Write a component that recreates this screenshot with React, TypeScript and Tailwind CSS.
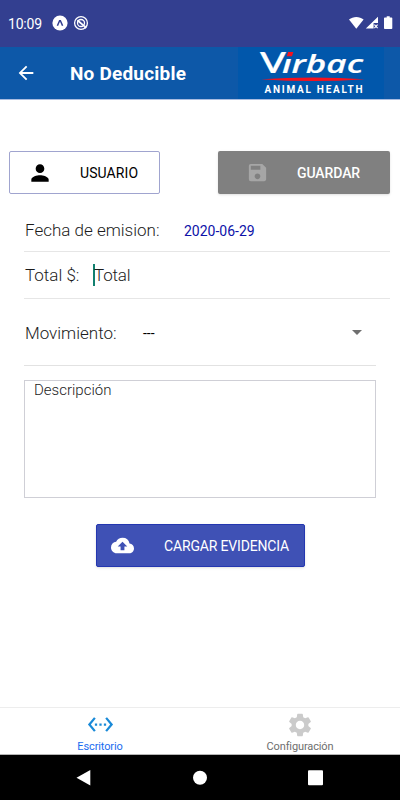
import { useState } from 'react';
import {
  MdArrowBack,
  MdArrowDropDown,
  MdCloudUpload,
  MdPerson,
  MdSave,
  MdSettings,
  MdSettingsEthernet,
} from 'react-icons/md';

function StatusBar() {
  return (
    <div className="h-[46px] shrink-0 bg-[#333f90] flex items-center pl-2 pr-[7px] text-white">
      <span className="w-[44px] mt-0.5 text-[14px] leading-4 tracking-[-0.2px]">10:09</span>
      <svg width="16" height="16" viewBox="0 0 16 16">
        <circle cx="8" cy="8" r="7.6" fill="#fff" />
        <path d="M5.4 10.8 7.6 5.8h.8l2.2 5" fill="none" stroke="#333f90" strokeWidth="1.5" />
      </svg>
      <svg width="16" height="16" viewBox="0 0 16 16" className="ml-[5px]" fill="none" stroke="#fff">
        <circle cx="8" cy="8" r="6.4" strokeWidth="1.3" />
        <circle cx="8" cy="8" r="3.5" strokeWidth="1.3" />
        <path d="m4.4 5.2 7.5 6.4" strokeWidth="1.8" />
        <path d="m11.5 11.5 1.6 1.6" strokeWidth="1.8" />
      </svg>
      <svg width="46" height="16" viewBox="0 0 46 16" className="ml-auto" fill="#fff">
        <path d="M2 4.6C6.2 1 12.4 1 16.6 4.6L9.3 13.7z" />
        <path d="M31 1.8v6.1h-4.4v5.6h-7.8z" />
        <path d="m27.4 9.6 3.2 3.6m0-3.6-3.2 3.6" stroke="#fff" strokeWidth="1.1" />
        <path d="M39.7 1.2h3v1.2h1.8c.5 0 .8.3.8.8v10c0 .5-.3.8-.8.8h-6.7c-.5 0-.8-.3-.8-.8v-10c0-.5.3-.8.8-.8h1.9z" />
      </svg>
    </div>
  );
}

function Logo() {
  return (
    <svg width="146" height="52" viewBox="0 0 146 52" className="bg-[#0157ab] overflow-visible">
      <g fill="#fff" stroke="#fff" strokeWidth="0.2" fontWeight="600">
        <text x="22" y="26.4" fontSize="29" fontFamily="Lato, sans-serif" textLength="26" lengthAdjust="spacingAndGlyphs">V</text>
        <text x="44" y="26.4" fontSize="25.5" fontFamily="'Open Sans', sans-serif" fontStyle="italic" textLength="81" lengthAdjust="spacingAndGlyphs">ırbac</text>
      </g>
      <path d="M50.2 5h5.2l-1.4 4.2h-5.2z" fill="#f5121d" />
      <path d="M23 32.2Q75 29 127 32.2Q75 36 23 32.2z" fill="#f5121d" />
      <text x="26.5" y="45.6" fill="#fff" fontFamily="Roboto, sans-serif" fontWeight="700" fontSize="10" textLength="98">
        ANIMAL HEALTH
      </text>
    </svg>
  );
}

function Header() {
  return (
    <header className="h-[54px] shrink-0 bg-[#0d58a8] border-t border-t-[#333f90] border-b border-b-[#a9bce0] flex items-center pl-[15px] pr-4">
      <MdArrowBack size={22} color="#fff" />
      <h1 className="ml-[33px] mt-0.5 text-[19px] tracking-[0.2px] font-bold text-white">No Deducible</h1>
      <div className="ml-auto">
        <Logo />
      </div>
    </header>
  );
}

export default function App() {
  const [descripcion, setDescripcion] = useState('');

  return (
    <div className="w-[400px] h-[800px] flex flex-col bg-white font-[Roboto,'Noto_Sans',sans-serif] text-[#1c1c1c] overflow-hidden">
      <StatusBar />
      <Header />

      <main className="flex-1 pt-[51px]">
        <div className="flex justify-between pl-[9px] pr-[10px]">
          <button className="w-[151px] h-[43px] border border-[#a0a4cf] rounded-xs flex items-center pl-[17px] text-black">
            <MdPerson size={26} />
            <span className="ml-[27px] mt-0.5 text-[14px] tracking-[0.1px]">USUARIO</span>
          </button>
          <button className="w-[172px] h-[43px] bg-[#808080] rounded-xs shadow-sm flex items-center pl-[28px] text-white">
            <MdSave size={23} color="#a6a6a6" />
            <span className="ml-[28px] mt-0.5 text-[14px] tracking-[-0.1px] font-medium">GUARDAR</span>
          </button>
        </div>

        <div className="ml-6 mr-[10px] h-[58px] pt-[17px] pl-px flex items-center border-b border-[#e6e6e6]">
          <span className="w-[159px] text-[17px] font-light">Fecha de emision:</span>
          <span className="text-[14px] text-[#0d12a8]">2020-06-29</span>
        </div>
        <div className="ml-6 mr-[10px] h-[47px] pt-0.5 pl-px flex items-center border-b border-[#e6e6e6]">
          <span className="w-[68px] text-[17px] font-light">Total $:</span>
          <span className="h-[22px] -mt-0.5 border-l-2 border-[#12806f] flex items-center text-[17px] tracking-[-0.2px] font-light">
            <span className="-ml-px mt-0.5">Total</span>
          </span>
        </div>
        <div className="ml-6 mr-6 h-[67px] pt-0.5 pl-px flex items-center border-b border-[#e2e2e2]">
          <span className="w-[118px] mt-px text-[17px] font-light">Movimiento:</span>
          <span className="text-[14px] text-black">---</span>
          <MdArrowDropDown size={24} color="#6f6f6f" className="ml-auto mr-[7px] -mt-0.5" />
        </div>

        <textarea
          value={descripcion}
          onChange={(e) => setDescripcion(e.target.value)}
          placeholder="Descripción"
          className="block mt-[14px] ml-6 w-[352px] h-[118px] resize-none border border-[#cfcfd6] px-[9px] py-0 text-[15px] leading-[19px] font-light placeholder-[#1c1c1c] focus:outline-none"
        />

        <button className="mt-[26px] ml-24 w-[209px] h-[43px] bg-[#3f51b5] border border-[#2437b0] rounded-xs shadow-sm flex items-center pl-[14px] text-white">
          <MdCloudUpload size={23} />
          <span className="ml-[30px] mt-0.5 text-[14px] tracking-[-0.16px]">CARGAR EVIDENCIA</span>
        </button>
      </main>

      <nav className="h-[48px] shrink-0 border-t border-[#ededed] border-b border-b-[#b5b5b5] grid grid-cols-2 text-[11px] leading-[16px] tracking-[-0.12px]">
        <div className="flex flex-col items-center pt-[3px] text-[#1a6cf0]">
          <MdSettingsEthernet size={27} color="#1a8ad8" />
          <span className="mt-px">Escritorio</span>
        </div>
        <div className="flex flex-col items-center pt-[3px] text-[#6e6e6e]">
          <MdSettings size={28} color="#cbcbcb" className="-mb-px" />
          <span className="mt-px">Configuración</span>
        </div>
      </nav>

      <div className="h-[45px] shrink-0 bg-black flex items-center">
        <svg width="400" height="16" viewBox="0 0 400 16" fill="#fff">
          <path d="M76.5 7.7 90.3 0v15.4z" />
          <circle cx="200" cy="7.7" r="7" />
          <rect x="308" y=".3" width="15" height="15" rx="1" />
        </svg>
      </div>
    </div>
  );
}
